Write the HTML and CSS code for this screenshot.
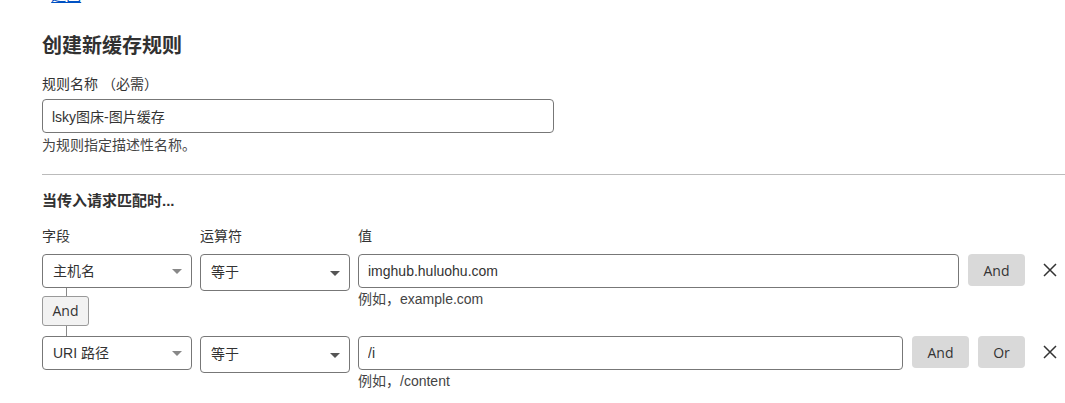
FILE: index.html
```html
<!DOCTYPE html>
<html lang="zh-CN">
<head>
  <meta charset="UTF-8">
  <title>创建新缓存规则</title>
  <link rel="stylesheet" href="styles.css">
</head>
<body>

<a class="back" href="#"><span class="chev">‹</span> <span class="back-text">返回</span></a>

<h2 class="title">创建新缓存规则</h2>

<label class="label" for="ruleName">规则名称 （必需）</label>
<input class="text-input rule-name" id="ruleName" type="text" value="lsky图床-图片缓存">
<div class="help">为规则指定描述性名称。</div>

<hr class="divider">

<h3 class="section">当传入请求匹配时...</h3>

<div class="conditions">
  <div class="col-label">字段</div>
  <div class="col-label">运算符</div>
  <div class="col-label">值</div>

  <!-- condition 1 -->
  <div class="select field">主机名<span class="caret light"></span></div>
  <div class="select op">等于<span class="caret"></span></div>
  <div class="value-row">
    <input class="text-input value" type="text" value="imghub.huluohu.com">
    <button class="logic">And</button>
    <button class="remove" aria-label="删除">
      <svg width="14" height="14" viewBox="0 0 14 14"><path d="M1 1 L13 13 M13 1 L1 13" stroke="#333" stroke-width="1.5" fill="none"/></svg>
    </button>
  </div>

  <div class="joiner">
    <span class="joiner-line top"></span>
    <span class="joiner-box">And</span>
    <span class="joiner-line"></span>
  </div>
  <div></div>
  <div class="help value-help">例如，example.com</div>

  <!-- condition 2 -->
  <div class="select field">URI 路径<span class="caret light"></span></div>
  <div class="select op">等于<span class="caret"></span></div>
  <div class="value-row">
    <input class="text-input value" type="text" value="/i">
    <button class="logic">And</button>
    <button class="logic or">Or</button>
    <button class="remove" aria-label="删除">
      <svg width="14" height="14" viewBox="0 0 14 14"><path d="M1 1 L13 13 M13 1 L1 13" stroke="#333" stroke-width="1.5" fill="none"/></svg>
    </button>
  </div>

  <div></div>
  <div></div>
  <div class="help value-help">例如，/content</div>
</div>

</body>
</html>
```

FILE: styles.css
```css
body {
  margin: 0;
  padding: 0 0 0 42px;
  font-family: "Liberation Sans", "Noto Sans CJK SC", sans-serif;
  font-size: 14px;
  color: #333;
  background: #fff;
  overflow: hidden;
}
.back {
  display: block;
  margin-top: -14px;
  height: 20px;
  line-height: 20px;
  color: #0051c3;
  text-decoration: none;
  font-size: 15px;
}
.back .chev {
  color: #666;
}
.back-text {
  text-decoration: underline;
}
.title {
  margin: 26px 0 0;
  font-size: 20px;
  line-height: 28px;
  font-weight: 700;
  color: #313131;
}
.label {
  display: block;
  margin-top: 14px;
  line-height: 20px;
}
.text-input {
  box-sizing: border-box;
  height: 34px;
  padding: 0 9px;
  border: 1px solid #777;
  border-radius: 4px;
  font-family: inherit;
  font-size: 14px;
  color: #333;
  background: #fff;
  outline: none;
}
.rule-name {
  display: block;
  width: 512px;
  margin-top: 5px;
}
.help {
  margin-top: 2px;
  line-height: 20px;
  color: #444;
}
.divider {
  margin: 19px 0 0;
  border: none;
  border-top: 1px solid #bbb;
}
.section {
  margin: 15px 0 0;
  font-size: 15px;
  line-height: 22px;
  font-weight: 700;
  color: #313131;
}
.conditions {
  display: grid;
  grid-template-columns: 150px 150px 1fr;
  column-gap: 8px;
  margin-top: 14px;
}
.col-label {
  line-height: 20px;
  margin-bottom: 8px;
}
.select {
  position: relative;
  box-sizing: border-box;
  height: 34px;
  padding-left: 10px;
  line-height: 32px;
  border: 1px solid #777;
  border-radius: 4px;
}
/* operator select renders a little taller, without pushing the row */
.select.op {
  height: 37px;
  line-height: 35px;
  margin-bottom: -3px;
}
.caret {
  position: absolute;
  right: 9px;
  top: 50%;
  margin-top: -2px;
  border-left: 5px solid transparent;
  border-right: 5px solid transparent;
  border-top: 5px solid #555;
}
.caret.light {
  border-top-color: #888;
}
.value-row {
  display: flex;
  align-items: flex-start;
  gap: 9px;
}
.value {
  flex: 1;
  min-width: 0;
}
.logic {
  width: 57px;
  height: 32px;
  border: none;
  border-radius: 4px;
  background: #d9d9d9;
  color: #333;
  font-family: "Open Sans", sans-serif;
  font-size: 14px;
  cursor: pointer;
}
.logic.or {
  width: 47px;
}
.remove {
  width: 40px;
  height: 32px;
  margin-left: -9px;
  padding: 0 0 0 9px;
  border: none;
  background: none;
  display: flex;
  align-items: center;
  justify-content: center;
  cursor: pointer;
}
.joiner {
  display: flex;
  flex-direction: column;
  align-items: flex-start;
}
.joiner-line {
  width: 1px;
  height: 10px;
  margin-left: 24px;
  background: #888;
}
.joiner-line.top {
  height: 8px;
}
.joiner-box {
  box-sizing: border-box;
  width: 47px;
  height: 30px;
  line-height: 28px;
  text-align: center;
  border: 1px solid #999;
  border-radius: 3px;
  background: #f2f2f2;
  font-family: "Open Sans", sans-serif;
  font-size: 14px;
}
.value-help {
  margin-top: 1px;
}
```
